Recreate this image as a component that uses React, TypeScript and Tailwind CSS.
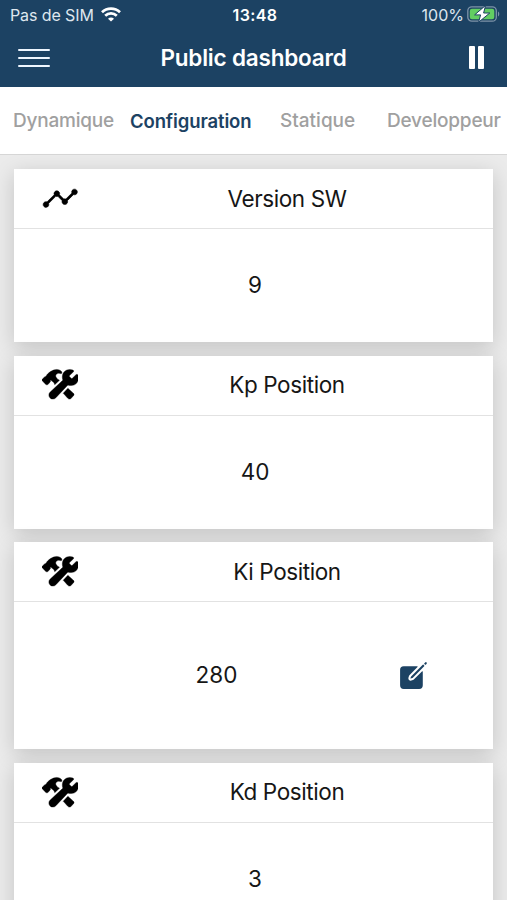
import { IoAnalytics, IoConstruct, IoCreate } from "react-icons/io5";

type Variable = {
  name: string;
  value: string;
  icon: "chart" | "tools";
  editable?: boolean;
};

const variables: Variable[] = [
  { name: "Version SW", value: "9", icon: "chart" },
  { name: "Kp Position", value: "40", icon: "tools" },
  { name: "Ki Position", value: "280", icon: "tools", editable: true },
  { name: "Kd Position", value: "3", icon: "tools" },
];

function StatusBar() {
  return (
    <div className="grid h-[29px] grid-cols-3 items-center pr-[7px] pl-[10px] text-[16px] text-[#dfe7ef]">
      <div className="flex items-center gap-[7px]">
        <span className="whitespace-nowrap tracking-[-0.1px]">Pas de SIM</span>
        <svg viewBox="0 0 20 15" className="h-[15px] w-5 shrink-0" fill="none" stroke="#fff" strokeWidth="2.7">
          <path d="M1 5.3C6 .4 14 .4 19 5.3" />
          <path d="M4.2 8.8c3.3-3.2 8.3-3.2 11.6 0" />
          <path d="M10 14.6 7 11.7c1.7-1.5 4.3-1.5 6 0z" fill="#fff" stroke="none" />
        </svg>
      </div>
      <span className="text-center font-semibold tracking-[0.4px] text-white">13:48</span>
      <div className="flex items-center justify-end gap-[3px]">
        <span>100%</span>
        <svg viewBox="0 0 33 18" className="mb-px h-[18px] w-[33px] shrink-0">
          <rect x=".8" y="1.8" width="28.5" height="14.4" rx="4" fill="none" stroke="#7d93a8" strokeWidth="1.3" />
          <path d="M31 6.5c1.7.8 1.7 4.2 0 5z" fill="#7d93a8" />
          <rect x="2.8" y="3.8" width="24.5" height="10.4" rx="2.2" fill="#62cd62" />
          <path
            d="M18.6.4 7.6 9.9h6L11.6 17.2 22.8 8h-6.2z"
            fill="#fff"
            stroke="#1c4263"
            strokeWidth="1"
          />
        </svg>
      </div>
    </div>
  );
}

function Header() {
  return (
    <header className="h-[87px] bg-[#1c4263] text-white">
      <StatusBar />
      <div className="grid h-[57px] grid-cols-[80px_1fr_80px] items-center">
        <button aria-label="Menu" className="flex w-[50px] flex-col gap-[6px] pt-px pl-[18px]">
          <span className="h-[2px] w-8 rounded-full bg-[#eef6ff]" />
          <span className="h-[2px] w-8 rounded-full bg-[#eef6ff]" />
          <span className="h-[2px] w-8 rounded-full bg-[#eef6ff]" />
        </button>
        <h1 className="text-center text-[22.5px] leading-[28px] font-semibold tracking-[-0.2px] whitespace-nowrap">
          Public dashboard
        </h1>
        <button aria-label="Pause" className="flex justify-end gap-[3px] pr-[23px]">
          <span className="h-[23px] w-[6px] rounded-[1px] bg-white" />
          <span className="h-[23px] w-[6px] rounded-[1px] bg-white" />
        </button>
      </div>
    </header>
  );
}

function Tabs() {
  return (
    <nav className="flex h-[68px] items-center border-b border-[#d6d6d6] bg-white pt-[2px] pl-[13px] text-[19px] font-medium tracking-[-0.2px] text-[#a0a0a0]">
      <a className="w-[117px]">Dynamique</a>
      <a className="w-[150px] text-[18.5px] font-semibold tracking-[-0.12px] text-[#1c4263]">Configuration</a>
      <a className="w-[107px] tracking-[0px]">Statique</a>
      <a className="whitespace-nowrap">Developpeur</a>
    </nav>
  );
}

function VariableCard({ name, value, icon, editable }: Variable) {
  const Icon = icon === "chart" ? IoAnalytics : IoConstruct;

  return (
    <section className="bg-white shadow-[0_5px_20px_rgba(0,0,0,0.17)]">
      <div className="flex h-[60px] items-center border-b border-[#e2e2e2] pl-[27px]">
        <Icon
          className={
            icon === "chart"
              ? "ml-[0.5px] size-[36.5px] stroke-black stroke-[8px] text-black"
              : "mb-[1px] ml-[0.5px] size-[36.5px] stroke-black stroke-[5px] text-black"
          }
        />
        <h2 className="flex-1 pl-[3px] text-center tracking-[-0.4px]">{name}</h2>
      </div>
      <div className={`flex items-center ${editable ? "h-[147px] pb-[1px]" : "h-[113px] pb-[1px]"}`}>
        <span className={editable ? "w-[405px] text-center" : "flex-1 pl-[3px] text-center"}>{value}</span>
        {editable && <IoCreate className="-ml-[22px] size-[33px] shrink-0 text-[#1c4263]" />}
      </div>
    </section>
  );
}

export default function App() {
  return (
    <div className="h-[900px] w-[507px] overflow-hidden bg-[#ebebeb] font-['Inter',sans-serif]">
      <Header />
      <Tabs />
      <main className="flex flex-col gap-[13.6px] px-[14px] pt-[14px] text-[22.5px] leading-[30px] text-[#161616]">
        {variables.map((variable) => (
          <VariableCard key={variable.name} {...variable} />
        ))}
      </main>
    </div>
  );
}
